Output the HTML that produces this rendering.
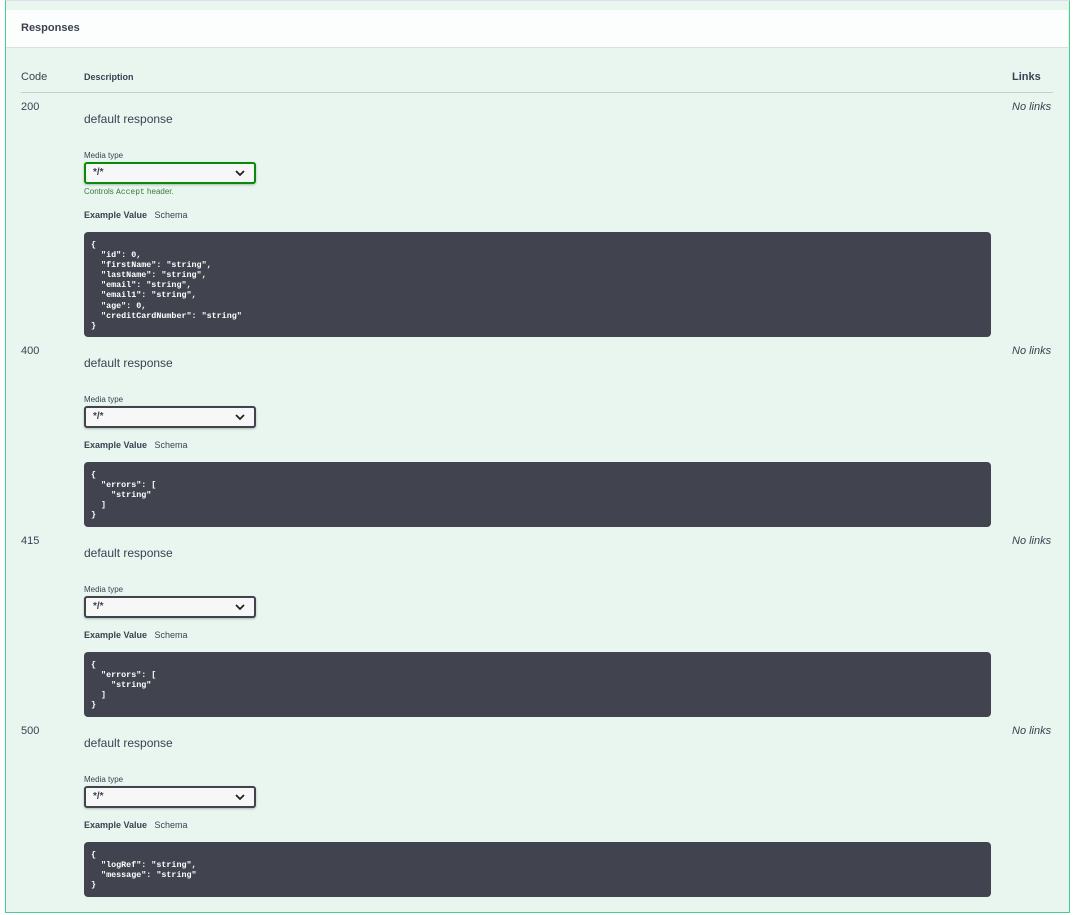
<!DOCTYPE html>
<html><head><style>
body{margin:0;width:1075px;height:915px;background:#fff;font-family:"Liberation Sans",sans-serif;color:#3b4151;position:relative;overflow:hidden}
.box{position:absolute;left:5px;top:0;width:1063px;height:911px;background:#e8f6ef;border:1px solid #49cc90;border-top:1px solid #dde}
.hdr{position:absolute;left:6px;top:10px;width:1062px;height:37px;background:#fcfefd;border-bottom:1px solid #d5e3dc}
.a{position:absolute;white-space:nowrap}
.sel{position:absolute;left:84px;width:168px;height:18px;border:2px solid #41444e;border-radius:3px;background:#f7f7f7;box-shadow:0 1px 2px rgba(0,0,0,.25);font-size:10px;font-weight:bold}
.sel span{position:absolute;left:7px;top:3px}
.sel svg{position:absolute;right:9px;top:6px}
pre{position:absolute;left:84px;width:893px;margin:0;padding:8px 7px 4px;background:#41444e;color:#fff;border-radius:4px;font:bold 8.4px/10.1px "Liberation Mono",monospace}
.s{font-size:8px;color:#3b4151}
.d{font-size:12px}
.c{font-size:11px}
.ev{font-size:9px}
.nl{font-size:11px;font-style:italic;left:1012px}
</style></head><body>
<div class="box"></div>
<div class="hdr"></div>
<div class="a" style="left:21px;top:22px;font-size:11px;font-weight:bold">Responses</div>
<div class="a" style="left:21px;top:71px;font-size:11px">Code</div>
<div class="a" style="left:84px;top:72px;font-size:9px;font-weight:bold">Description</div>
<div class="a" style="left:1012px;top:71px;font-size:11px;font-weight:bold">Links</div>
<div class="a" style="left:21px;top:92px;width:1032px;border-top:1px solid #c5cdd0"></div>

<div class="a c" style="left:21px;top:101px">200</div>
<div class="a nl" style="top:101px">No links</div>
<div class="a d" style="left:84px;top:112px">default response</div>
<div class="a s" style="left:84px;top:151px">Media type</div>
<div class="sel" style="top:162px;border-color:#0a8a0a"><span>*/*</span><svg width="10" height="7" viewBox="0 0 10 7"><path d="M1 1l4 4 4-4" stroke="#222" stroke-width="1.8" fill="none"/></svg></div>
<div class="a" style="left:84px;top:187px;font-size:8px;color:#3b7a3b">Controls <span style="font-family:'Liberation Mono',monospace">Accept</span> header.</div>
<div class="a ev" style="left:84px;top:210px"><b>Example Value</b>&nbsp;&nbsp; Schema</div>
<pre style="top:232px;height:93px">{
  "id": 0,
  "firstName": "string",
  "lastName": "string",
  "email": "string",
  "email1": "string",
  "age": 0,
  "creditCardNumber": "string"
}</pre>

<div class="a c" style="left:21px;top:345px">400</div>
<div class="a nl" style="top:345px">No links</div>
<div class="a d" style="left:84px;top:356px">default response</div>
<div class="a s" style="left:84px;top:395px">Media type</div>
<div class="sel" style="top:406px"><span>*/*</span><svg width="10" height="7" viewBox="0 0 10 7"><path d="M1 1l4 4 4-4" stroke="#222" stroke-width="1.8" fill="none"/></svg></div>
<div class="a ev" style="left:84px;top:440px"><b>Example Value</b>&nbsp;&nbsp; Schema</div>
<pre style="top:462px;height:53px">{
  "errors": [
    "string"
  ]
}</pre>

<div class="a c" style="left:21px;top:535px">415</div>
<div class="a nl" style="top:535px">No links</div>
<div class="a d" style="left:84px;top:546px">default response</div>
<div class="a s" style="left:84px;top:585px">Media type</div>
<div class="sel" style="top:596px"><span>*/*</span><svg width="10" height="7" viewBox="0 0 10 7"><path d="M1 1l4 4 4-4" stroke="#222" stroke-width="1.8" fill="none"/></svg></div>
<div class="a ev" style="left:84px;top:630px"><b>Example Value</b>&nbsp;&nbsp; Schema</div>
<pre style="top:652px;height:53px">{
  "errors": [
    "string"
  ]
}</pre>

<div class="a c" style="left:21px;top:725px">500</div>
<div class="a nl" style="top:725px">No links</div>
<div class="a d" style="left:84px;top:736px">default response</div>
<div class="a s" style="left:84px;top:775px">Media type</div>
<div class="sel" style="top:786px"><span>*/*</span><svg width="10" height="7" viewBox="0 0 10 7"><path d="M1 1l4 4 4-4" stroke="#222" stroke-width="1.8" fill="none"/></svg></div>
<div class="a ev" style="left:84px;top:820px"><b>Example Value</b>&nbsp;&nbsp; Schema</div>
<pre style="top:842px;height:43px">{
  "logRef": "string",
  "message": "string"
}</pre>
</body></html>
